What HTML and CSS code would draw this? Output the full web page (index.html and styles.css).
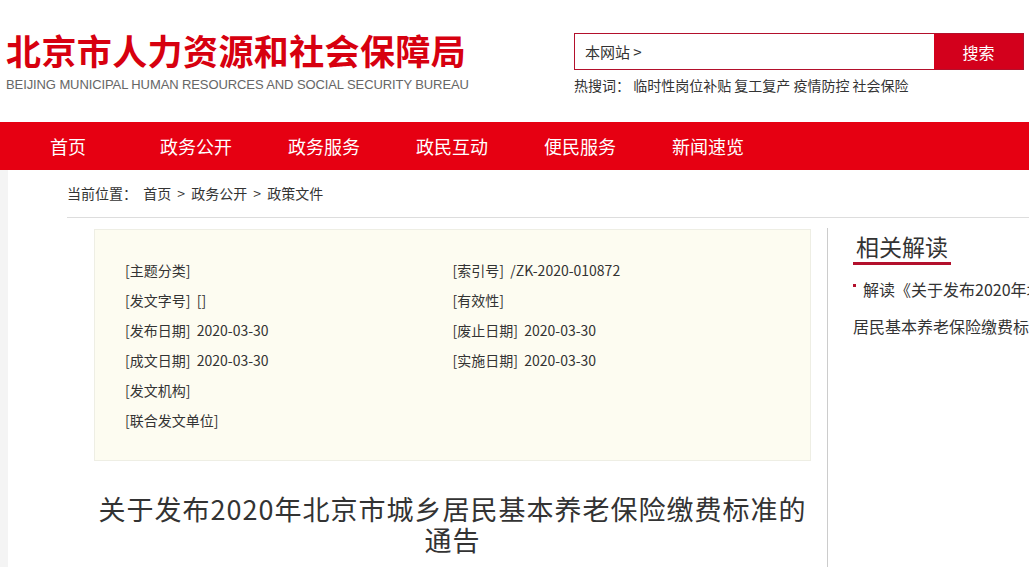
FILE: index.html
```html
<!DOCTYPE html>
<html lang="zh-CN">
<head>
  <meta charset="UTF-8">
  <meta name="viewport" content="width=device-width, initial-scale=1.0">
  <link rel="stylesheet" href="styles.css">
</head>
<body>
  <div class="header">
    <div class="logo">
      <div class="logo-cn">北京市人力资源和社会保障局</div>
      <div class="logo-en">BEIJING MUNICIPAL HUMAN RESOURCES AND SOCIAL SECURITY BUREAU</div>
    </div>
    <div class="search">
      <div class="search-box">
        <div class="search-scope">本网站 &gt;</div>
        <button class="search-btn">搜索</button>
      </div>
      <div class="hot-words">热搜词：&nbsp;临时性岗位补贴 复工复产 疫情防控 社会保险</div>
    </div>
  </div>

  <div class="nav">
    <a href="#">首页</a>
    <a href="#">政务公开</a>
    <a href="#">政务服务</a>
    <a href="#">政民互动</a>
    <a href="#">便民服务</a>
    <a href="#">新闻速览</a>
  </div>

  <div class="main">
    <div class="main-inner">
      <div class="crumbs">当前位置：&nbsp;首页 &gt; 政务公开 &gt; 政策文件</div>
      <div class="content">
        <div class="article">
          <div class="meta">
            <div>[主题分类]</div>
            <div>[索引号]&nbsp; /ZK-2020-010872</div>
            <div>[发文字号]&nbsp; []</div>
            <div>[有效性]</div>
            <div>[发布日期]&nbsp; 2020-03-30</div>
            <div>[废止日期]&nbsp; 2020-03-30</div>
            <div>[成文日期]&nbsp; 2020-03-30</div>
            <div>[实施日期]&nbsp; 2020-03-30</div>
            <div>[发文机构]</div>
            <div></div>
            <div>[联合发文单位]</div>
            <div></div>
          </div>
          <h1 class="title">关于发布2020年北京市城乡居民基本养老保险缴费标准的<span class="nowrap">通告</span></h1>
        </div>
        <div class="side">
          <h2 class="side-title">相关解读</h2>
          <ul class="side-list">
            <li>解读《关于发布2020年北京市城乡居民基本养老保险缴费标准的通告》</li>
          </ul>
        </div>
      </div>
    </div>
  </div>
</body>
</html>
```

FILE: styles.css
```css
:root {
  --nav-red: #e60012;
  --logo-red: #d7000f;
  --dark-red: #b3102c;
  --text: #333;
}

html, body {
  overflow: hidden;
}

body {
  margin: 0;
  font-family: "Noto Sans CJK SC", "Noto Sans", sans-serif;
  color: var(--text);
  background-color: #fff;
}

.header {
  display: flex;
  justify-content: space-between;
  height: 122px;
  padding: 0 5px 0 6px;
}

.logo {
  padding-top: 25px;
}

.logo-cn {
  font-size: 35px;
  line-height: 50px;
  font-weight: bold;
  color: var(--logo-red);
  letter-spacing: 0.4px;
}

.logo-en {
  margin-top: 2px;
  font-family: "Liberation Sans", Arial, sans-serif;
  font-size: 13px;
  line-height: 16px;
  color: #666;
  letter-spacing: -0.1px;
}

.search {
  width: 450px;
  padding-top: 33px;
}

.search-box {
  display: flex;
  height: 37px;
  border: 1px solid var(--dark-red);
  box-sizing: border-box;
}

.search-scope {
  flex: 1;
  padding-left: 10px;
  font-size: 15px;
  line-height: 35px;
}

.search-btn {
  width: 89px;
  border: none;
  background-color: #d3001c;
  color: #fff;
  font-family: inherit;
  font-size: 16px;
  cursor: pointer;
}

.hot-words {
  margin-top: 5px;
  font-size: 14px;
  line-height: 20px;
}

.nav {
  display: flex;
  height: 48px;
  padding-left: 4px;
  background-color: var(--nav-red);
}

.nav a {
  width: 128px;
  text-align: center;
  font-size: 18px;
  line-height: 48px;
  color: #fff;
  text-decoration: none;
}

.main {
  background-color: #f4f4f4;
  padding-left: 8px;
  height: 400px;
}

.main-inner {
  width: 1200px;
  height: 100%;
  padding-left: 59px;
  background-color: #fff;
}

.crumbs {
  padding-top: 13px;
  padding-bottom: 14px;
  border-bottom: 1px solid #ddd;
  font-size: 14px;
  line-height: 20px;
  word-spacing: 3px;
}

.content {
  display: flex;
  height: 100%;
}

.article {
  width: 717px;
  margin-top: 10px;
  padding: 1px 16px 0 27px;
  border-right: 1px solid #ccc;
}

.meta {
  display: grid;
  grid-template-columns: 1fr 1fr;
  padding: 25px 30px 25px;
  background-color: #fdfcf1;
  border: 1px solid #eeeee4;
  font-size: 14px;
  line-height: 30px;
}

.title {
  margin: 32px 0 0;
  font-size: 27px;
  font-weight: normal;
  line-height: 31px;
  letter-spacing: 1px;
  text-align: center;
  color: var(--text);
}

.nowrap {
  white-space: nowrap;
}

.side {
  width: 260px;
  padding-left: 25px;
  padding-top: 13px;
}

.side-title {
  display: inline-block;
  margin: 0;
  padding: 0 3px;
  font-size: 23px;
  font-weight: normal;
  line-height: 31px;
  border-bottom: 3px solid var(--dark-red);
}

.side-list {
  margin: 6px 0 0;
  padding: 0;
  list-style: none;
  font-size: 16px;
  line-height: 37px;
}

.side-list li::before {
  content: "";
  display: inline-block;
  width: 3px;
  height: 3px;
  margin-right: 7px;
  vertical-align: 9px;
  background-color: var(--dark-red);
}
```
